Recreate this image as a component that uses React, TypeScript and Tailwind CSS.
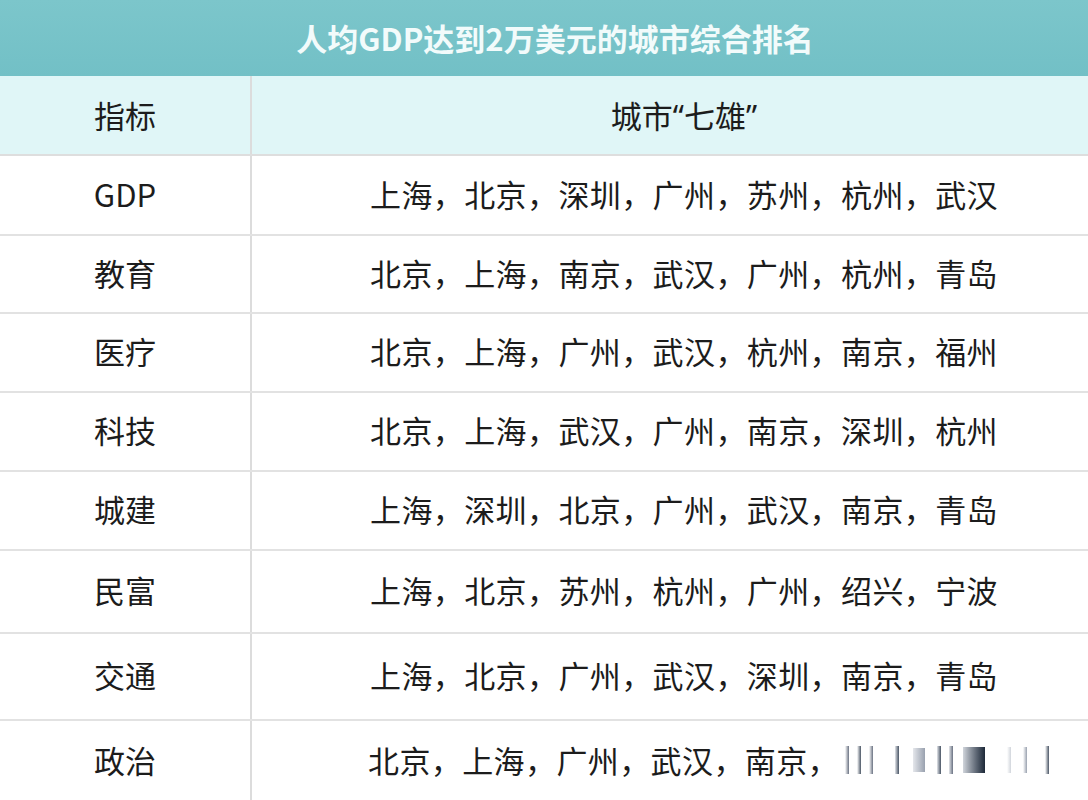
const rows: { label: string; cities: string; height: string }[] = [
  { label: "GDP", cities: "上海，北京，深圳，广州，苏州，杭州，武汉", height: "h-[80px]" },
  { label: "教育", cities: "北京，上海，南京，武汉，广州，杭州，青岛", height: "h-[78px]" },
  { label: "医疗", cities: "北京，上海，广州，武汉，杭州，南京，福州", height: "h-[79px]" },
  { label: "科技", cities: "北京，上海，武汉，广州，南京，深圳，杭州", height: "h-[79px]" },
  { label: "城建", cities: "上海，深圳，北京，广州，武汉，南京，青岛", height: "h-[79px]" },
  { label: "民富", cities: "上海，北京，苏州，杭州，广州，绍兴，宁波", height: "h-[83px]" },
  { label: "交通", cities: "上海，北京，广州，武汉，深圳，南京，青岛", height: "h-[87px]" },
];

function Smear() {
  // blurred watermark strip at the end of the last row
  const bars = [
    "ml-[4px] w-[4px] h-[28px] from-transparent to-gray-500",
    "ml-[8px] w-[4px] h-[28px] from-transparent to-gray-600",
    "ml-[8px] w-[4px] h-[28px] from-transparent to-gray-500",
    "ml-[22px] w-[4px] h-[28px] from-gray-200 to-gray-600",
    "ml-[14px] w-[12px] h-[24px] from-gray-200 to-gray-400",
    "ml-[12px] w-[4px] h-[28px] from-gray-200 to-gray-600",
    "ml-[8px] w-[4px] h-[28px] from-gray-200 to-gray-500",
    "ml-[10px] w-[22px] h-[26px] from-gray-300 to-gray-800",
    "ml-[22px] w-[4px] h-[26px] from-transparent to-gray-300",
    "ml-[12px] w-[4px] h-[26px] from-transparent to-gray-400",
    "ml-[18px] w-[4px] h-[28px] from-transparent to-gray-600",
  ];
  return (
    <span className="ml-[2px] inline-flex items-center">
      {bars.map((b, i) => (
        <span key={i} className={`inline-block bg-gradient-to-r ${b}`} />
      ))}
    </span>
  );
}

export default function App() {
  return (
    <div
      className="h-[800px] w-[1088px] overflow-hidden bg-white text-[#1c1c1c]"
      style={{ fontFamily: '"Noto Sans CJK SC", "Noto Sans", sans-serif' }}
    >
      <div className="flex h-[76px] items-center justify-center bg-gradient-to-b from-[#7cc6cb] to-[#72c0c6] pl-[22px] text-[31px] font-bold text-[#f2fbfb]">
        人均GDP达到2万美元的城市综合排名
      </div>

      <div className="flex h-[80px] border-b-2 border-[#dedede] bg-[#e0f6f7] text-[31px]">
        <div className="flex w-[252px] items-center justify-center border-r-2 border-[#dcdcdc]">
          指标
        </div>
        <div className="flex flex-1 items-center justify-center pl-[28px]">
          城市
          <span style={{ fontFamily: '"Noto Sans", sans-serif' }}>“</span>
          七雄
          <span style={{ fontFamily: '"Noto Sans", sans-serif' }}>”</span>
        </div>
      </div>

      {rows.map((row) => (
        <div
          key={row.label}
          className={`flex ${row.height} border-b-2 border-[#e2e2e2] text-[31px]`}
        >
          <div className="flex w-[252px] items-center justify-center border-r-2 border-[#dcdcdc] pb-[2px]">
            {row.label}
          </div>
          <div className="flex flex-1 items-center justify-center whitespace-nowrap pl-[28px] pb-[2px] tracking-[0.4px]">
            {row.cities}
          </div>
        </div>
      ))}

      <div className="flex h-[80px] text-[31px]">
        <div className="flex w-[252px] items-center justify-center border-r-2 border-[#dcdcdc] pb-[2px]">
          政治
        </div>
        <div className="flex flex-1 items-center whitespace-nowrap pl-[116px] pb-[2px] tracking-[0.4px]">
          北京，上海，广州，武汉，南京，
          <Smear />
        </div>
      </div>
    </div>
  );
}
